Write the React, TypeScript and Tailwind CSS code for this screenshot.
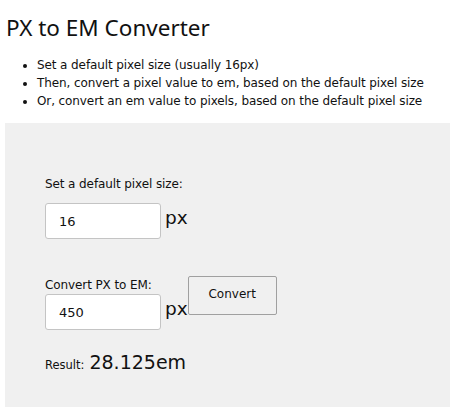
import { useState } from "react";

const App = () => {
  const [base, setBase] = useState("16");
  const [px, setPx] = useState("450");
  const [result, setResult] = useState("28.125em");

  const convert = () => {
    const b = parseFloat(base) || 16;
    const v = parseFloat(px) || 0;
    setResult(`${v / b}em`);
  };

  return (
    <div className="bg-white text-[#111] h-[407px] overflow-hidden font-['DejaVu_Sans',sans-serif]">
      <h1 className="pl-[6px] pt-[13px] text-[22.5px] leading-[29px] font-['Noto_Sans',sans-serif] font-normal">
        PX to EM Converter
      </h1>
      <ul className="mt-[14px] pl-[37px] list-disc text-[12px] tracking-[-0.1px] leading-[18px]">
        <li>Set a default pixel size (usually 16px)</li>
        <li>Then, convert a pixel value to em, based on the default pixel size</li>
        <li>Or, convert an em value to pixels, based on the default pixel size</li>
      </ul>
      <div className="ml-[5px] mt-[13px] bg-[#f0f0f0] h-[290px] pl-[40px] pt-[53px]">
        <div className="text-[12px] tracking-[-0.1px] leading-[16px]">Set a default pixel size:</div>
        <div className="flex items-center mt-[11px]">
          <input
            value={base}
            onChange={(e) => setBase(e.target.value)}
            className="w-[116px] h-[36px] bg-white border border-[#c4c4c4] rounded-[3px] pl-[13px] text-[13px] outline-none"
          />
          <span className="ml-[4px] text-[18.5px] leading-[20px] -mt-[6px]">px</span>
        </div>
        <div className="flex items-start mt-[36px]">
          <div>
            <div className="text-[12px] tracking-[-0.1px] leading-[16px] mt-[2px]">Convert PX to EM:</div>
            <div className="flex items-center mt-[1px]">
              <input
                value={px}
                onChange={(e) => setPx(e.target.value)}
                className="w-[116px] h-[36px] bg-white border border-[#c4c4c4] rounded-[3px] pl-[13px] text-[13px] outline-none"
              />
              <span className="ml-[4px] text-[18.5px] leading-[20px] -mt-[6px]">px</span>
            </div>
          </div>
          <button
            onClick={convert}
            className="w-[89px] h-[39px] bg-[#f0f0f0] border border-[#a0a0a0] rounded-[2px] text-[12px] pb-[3px] mt-[1px]"
          >
            Convert
          </button>
        </div>
        <div className="mt-[18px] flex items-baseline">
          <span className="text-[11.5px]">Result:</span>
          <span className="ml-[5px] text-[19px]">{result}</span>
        </div>
      </div>
    </div>
  );
};

export default App;
